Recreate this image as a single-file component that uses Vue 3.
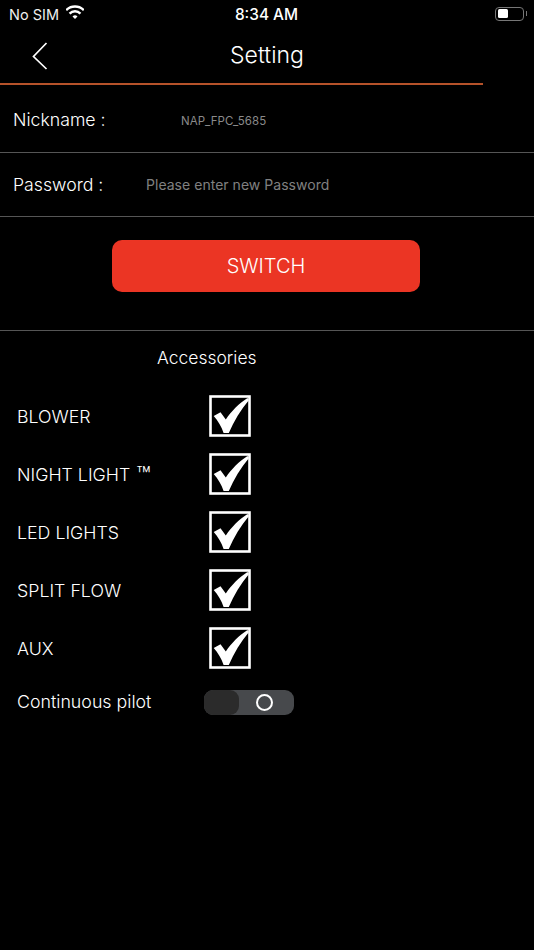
<script setup>
const items = [
  { name: 'BLOWER' },
  { name: 'NIGHT LIGHT', mark: '™' },
  { name: 'LED LIGHTS' },
  { name: 'SPLIT FLOW' },
  { name: 'AUX' }
]
</script>

<template>
  <div class="page">
    <div class="status">
      <div class="status-left">
        <span>No SIM</span>
        <svg class="wifi" width="18" height="15" viewBox="0 0 18 15">
          <path d="M6.5 11.5a3.5 3.5 0 0 1 5 0L9 14Z" fill="#fff"/>
          <path d="M3.56 8.56a7.7 7.7 0 0 1 10.88 0" fill="none" stroke="#fff" stroke-width="2.4"/>
          <path d="M.16 5.16a12.5 12.5 0 0 1 17.68 0" fill="none" stroke="#fff" stroke-width="2.4"/>
        </svg>
      </div>
      <span class="time">8:34 AM</span>
      <div class="battery"><div class="battery-fill"></div><div class="battery-tip"></div></div>
    </div>

    <header class="header">
      <svg class="back" width="18" height="30" viewBox="0 0 18 30">
        <path d="M15.5 2 2.5 15.5 15.5 28" fill="none" stroke="#fff" stroke-width="1.7"/>
      </svg>
      <h1>Setting</h1>
    </header>

    <div class="field field-nick">
      <span class="field-label">Nickname :</span>
      <span class="nick">NAP_FPC_5685</span>
    </div>
    <div class="field field-pass">
      <span class="field-label">Password :</span>
      <span class="hint">Please enter new Password</span>
    </div>

    <div class="switch-wrap"><button class="switch">SWITCH</button></div>

    <section class="acc">
      <div class="acc-title">Accessories</div>
      <div class="acc-list">
        <div v-for="item in items" :key="item.name" class="acc-row">
          <span class="acc-label">{{ item.name }}<span v-if="item.mark" class="mark">{{ item.mark }}</span></span>
          <svg class="check" width="42" height="42" viewBox="0 0 42 42">
            <rect x="1.5" y="1.5" width="39" height="39" fill="none" stroke="#fff" stroke-width="2.6"/>
            <path d="M4.7 21 11.5 17.2 16.8 24.5C22 16.5 30 8.5 38.5 3L40 5C31.5 15 25 26 19.8 38H14.6C12.5 31.5 9 26 4.7 21Z" fill="#fff"/>
          </svg>
        </div>
      </div>
      <div class="pilot">
        <span class="acc-label">Continuous pilot</span>
        <div class="toggle">
          <div class="toggle-off"></div>
          <div class="toggle-on"><i class="ring"></i></div>
        </div>
      </div>
    </section>
  </div>
</template>

<style scoped>
.page {
  width: 534px;
  height: 950px;
  background: #000;
  color: #fff;
  font-family: Inter, "Liberation Sans", sans-serif;
  font-weight: 300;
  overflow: hidden;
}
.status {
  height: 29px;
  display: grid;
  grid-template-columns: 1fr auto 1fr;
  align-items: center;
  padding: 0 10px 0 9px;
  font-size: 14.5px;
}
.status-left { display: flex; align-items: center; gap: 7px; color: #eee; font-weight: 400; }
.wifi { margin-top: -4px; }
.time { font-size: 15.4px; font-weight: 500; }
.battery {
  justify-self: end;
  position: relative;
  width: 29px;
  height: 14px;
  margin-top: -2px;
  border: 1px solid #777;
  border-radius: 4px;
  box-sizing: border-box;
  padding: 1.5px 2px;
}
.battery-fill { width: 10px; height: 100%; background: #fff; border-radius: 1.5px; }
.battery-tip {
  position: absolute;
  right: -4px;
  top: 3.5px;
  width: 1.5px;
  height: 5px;
  background: #777;
}
.header {
  height: 56px;
  width: 483px;
  box-sizing: border-box;
  border-bottom: 2px solid #b5522a;
  position: relative;
}
.back { position: absolute; left: 31px; top: 12px; }
h1 {
  position: absolute;
  left: 0;
  width: 534px;
  top: 11px;
  margin: 0;
  text-align: center;
  font-size: 23px;
  line-height: 30px;
  font-weight: 300;
}
.field {
  box-sizing: border-box;
  border-bottom: 1px solid #555;
  display: flex;
  align-items: center;
  padding-left: 13px;
}
.field-nick { height: 68px; padding-top: 1px; }
.field-pass { height: 64px; }
.field-label { font-size: 17.7px; width: 133px; flex: none; }
.nick { font-size: 11.5px; color: #8a8a8a; margin: 4px 0 0 35px; letter-spacing: .05px; font-weight: 400; }
.hint { font-size: 14px; color: #808080; font-weight: 400; letter-spacing: .03px; }
.switch-wrap {
  height: 114px;
  box-sizing: border-box;
  padding: 23px 2px 0 0;
  border-bottom: 1px solid #555;
  display: flex;
  justify-content: center;
  align-items: flex-start;
}
.switch {
  width: 308px;
  height: 52px;
  border: 0;
  border-radius: 10px;
  background: #eb3524;
  color: #fff;
  font: inherit;
  font-size: 20px;
}
.acc { padding-left: 17px; }
.acc-title {
  font-size: 17.5px;
  line-height: 24px;
  margin: 15px 0 0 140px;
}
.acc-list { margin-top: 17px; }
.acc-row {
  height: 58px;
  display: flex;
  align-items: center;
}
.acc-row .acc-label { margin-top: 2px; }
.acc-label { font-size: 17.8px; line-height: 26px; width: 192px; flex: none; }
.mark { font-size: 24px; line-height: 0; margin-left: 6px; vertical-align: -3px; }
.pilot { display: flex; align-items: center; height: 25px; margin-top: 13px; }
.pilot .acc-label { width: 187px; margin-top: -2px; }
.toggle {
  width: 90px;
  height: 25px;
  border-radius: 9px;
  background: #47494c;
  display: flex;
}
.toggle-off {
  width: 35px;
  background: #2b2b2b;
  border-radius: 9px;
}
.toggle-on { flex: 1; display: flex; align-items: center; justify-content: center; padding-right: 4px; }
.ring {
  width: 17px;
  height: 17px;
  box-sizing: border-box;
  border: 2.5px solid #fff;
  border-radius: 50%;
}
</style>

<style>
html, body { background: #000; }
</style>
